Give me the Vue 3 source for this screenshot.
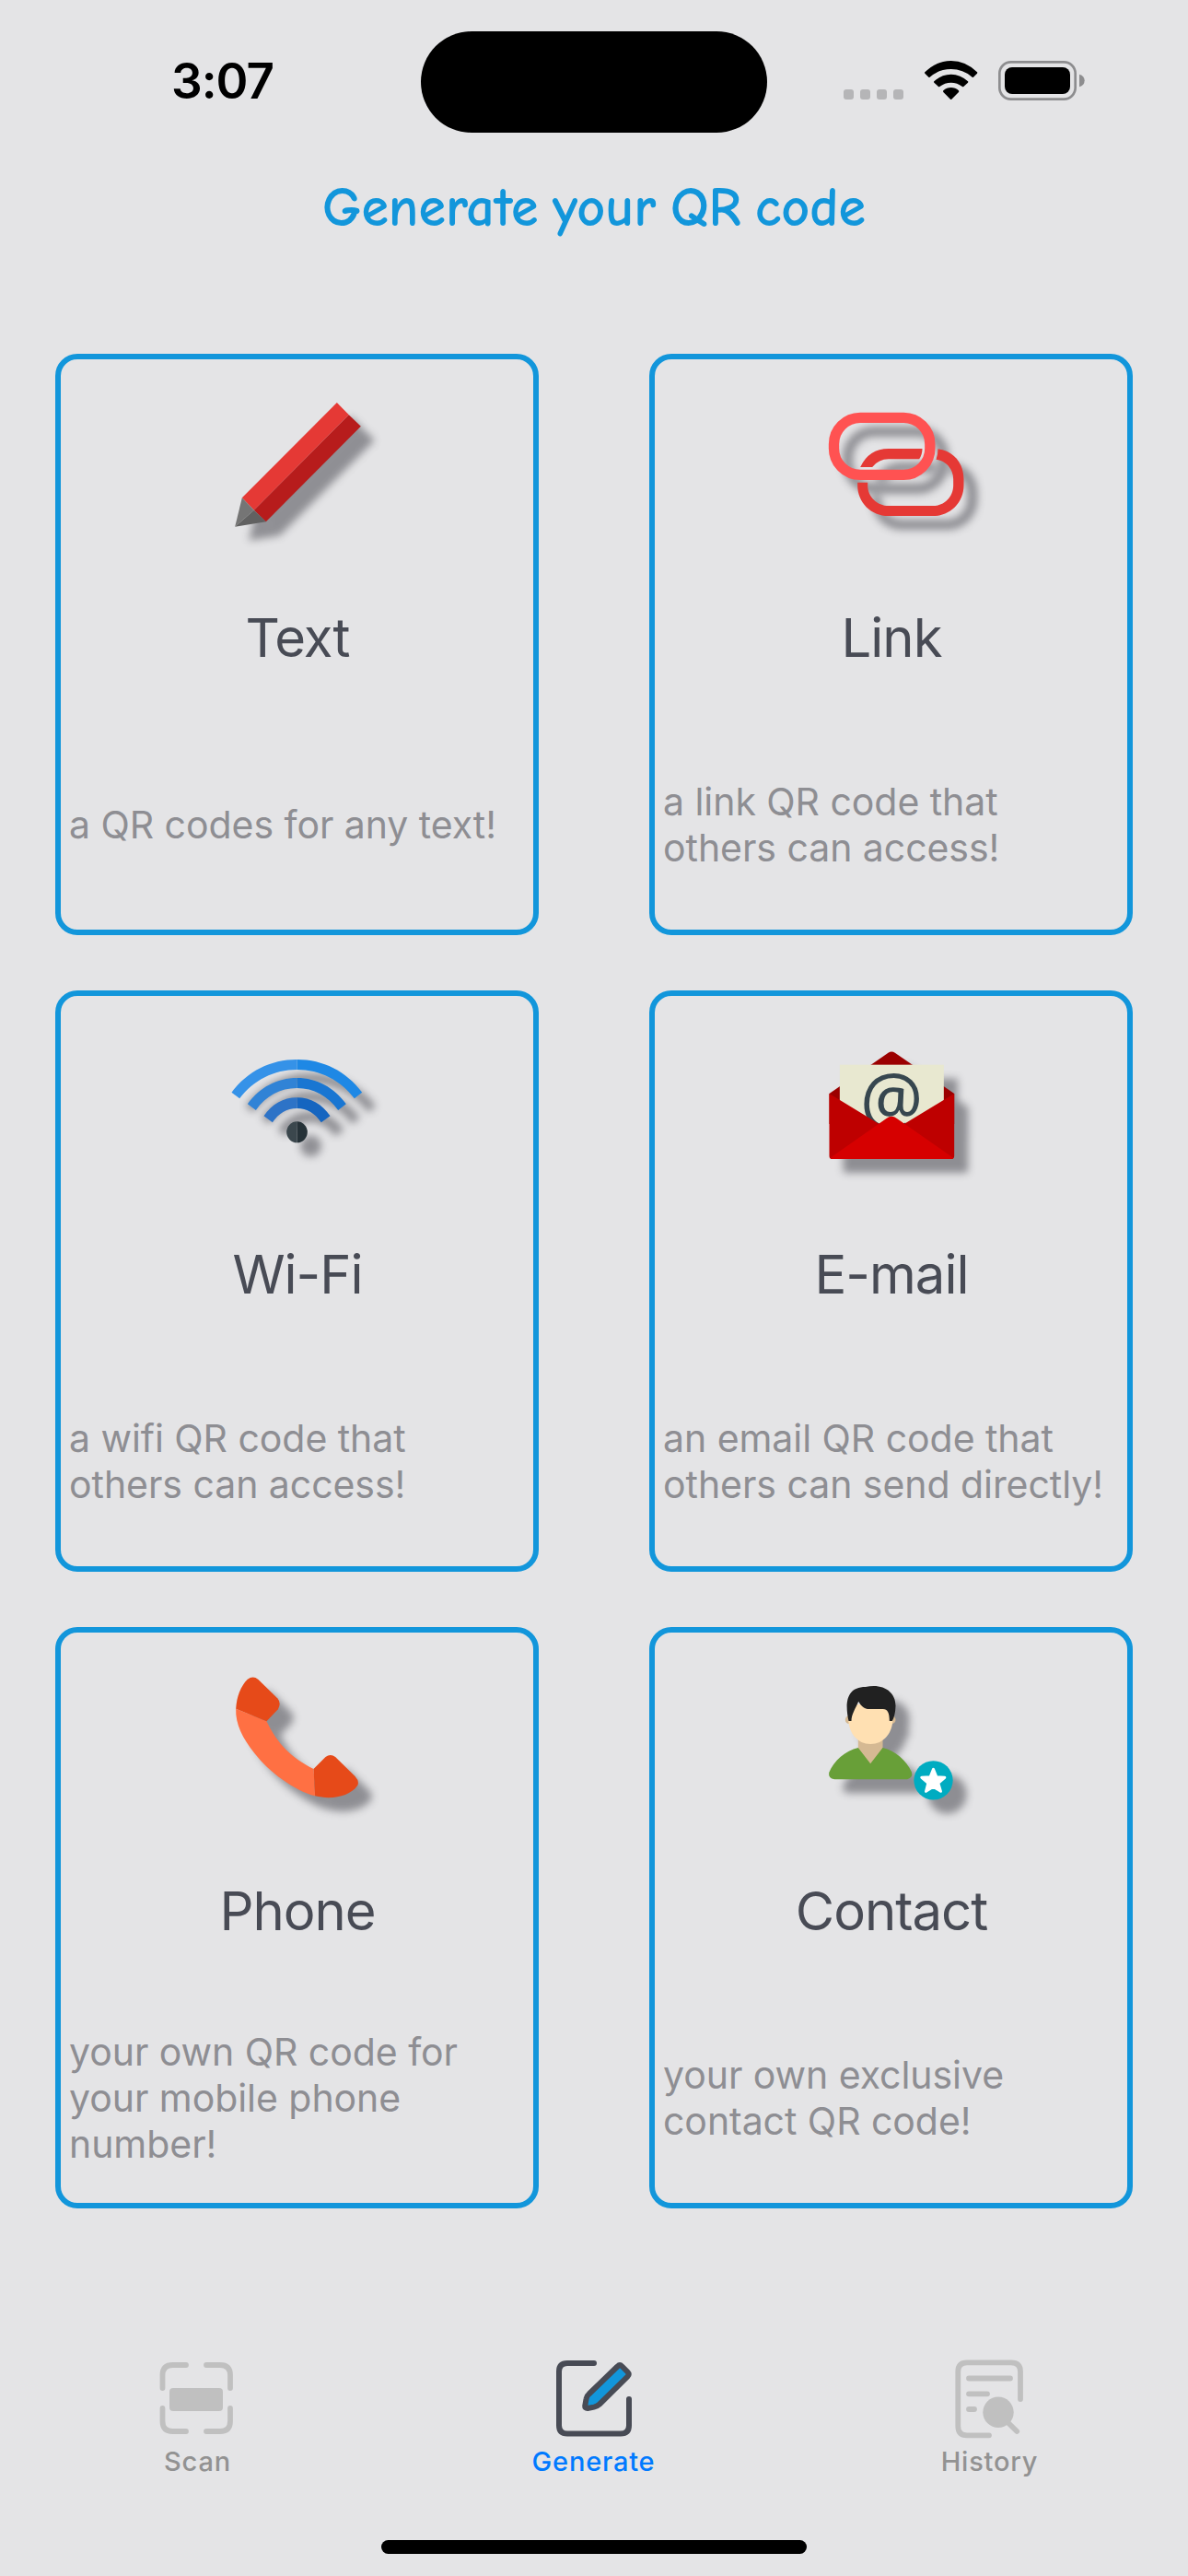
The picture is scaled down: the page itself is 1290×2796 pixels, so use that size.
<template>
  <div class="screen">
    <header class="status-bar">
      <div class="time">3:07</div>
      <div class="island"></div>
      <svg class="indicators" viewBox="0 0 900 210">
        <g fill="#b5b5b7">
          <rect v-for="x in [48, 102, 156, 210]" :key="x" :x="x" y="138" width="33" height="33" rx="9" />
        </g>
        <path d="M313 82Q350 45 398 45Q446 45 483 82Q485 84 483 86L471 98Q469 100 467 98Q437 72 398 72Q359 72 329 98Q327 100 325 98L313 86Q311 84 313 82Z" />
        <path d="M343 112Q367 89 398 89Q429 89 453 112Q455 114 453 116L439 129Q437 131 435 129Q418 116 398 116Q378 116 361 129Q359 131 357 129L343 116Q341 114 343 112Z" />
        <path d="M373 142Q384 132 398 132Q412 132 423 142Q425 144 423 147L400 170Q398 172 396 170L373 147Q371 144 373 142Z" />
        <rect x="556" y="49" width="247" height="121" rx="37" fill="none" stroke="#8d8d8f" stroke-width="8" />
        <rect x="573" y="66" width="213" height="87" rx="24" />
        <path d="M816 89Q833 94 833 109Q833 125 816 130Z" fill="#8d8d8f" />
      </svg>
    </header>

    <h1 class="heading">Generate your QR code</h1>

    <main class="grid">
      <section v-for="c in cards" :key="c.icon" class="card">
        <svg v-if="c.icon==='text'" class="icon" viewBox="82.5 75 450 450">
          <path d="M439 81L478 121L169 431L130 391Z" fill="#e53935" />
          <path d="M478 121L517 158L208 469L169 431Z" fill="#b71c1c" />
          <path d="M130 391L169 431L107 485Z" fill="#757575" />
          <path d="M169 431L208 469L107 485Z" fill="#616161" />
        </svg>

        <svg v-else-if="c.icon==='link'" class="icon" viewBox="97.5 75 450 450">
          <g fill="#e53935">
            <path d="M224 291Q252 231 316 231H426Q426 250 416 265H316Q284 265 263 291Z" />
            <path d="M477 232C528 238 561 279 561 330V350C561 406 517 450 461 450H316C259 450 215 406 215 350V341H248V350C248 387 279 417 316 417H461C498 417 527 387 527 350V330C527 297 503 270 471 266Q477 250 477 232Z" />
          </g>
          <rect x="138" y="130" width="313" height="186" rx="86" fill="none" stroke="#ff5252" stroke-width="34" />
        </svg>

        <svg v-else-if="c.icon==='wifi'" class="icon" viewBox="82.5 48 450 450">
          <path d="M96 227C148 158 223 120 309 120V153C234 153 167 187 122 247Z" fill="#3592e8" />
          <path d="M521 227C469 158 394 120 309 120V153C384 153 451 187 496 247Z" fill="#1e88e5" />
          <path d="M148 265C187 211 244 180 309 180V213C254 213 207 239 175 285Z" fill="#3083d6" />
          <path d="M469 265C430 211 373 180 309 180V213C363 213 410 239 443 285Z" fill="#1976d2" />
          <path d="M201 304C227 266 264 244 309 244V279C275 279 249 296 229 325Z" fill="#2d73c7" />
          <path d="M417 304C391 266 354 244 309 244V279C342 279 368 296 388 325Z" fill="#1565c0" />
          <path d="M309 322A34 34.500 0 0 0 309 391Z" fill="#3b474d" />
          <path d="M309 322A34 34.500 0 0 1 309 391Z" fill="#263238" />
        </svg>

        <svg v-else-if="c.icon==='email'" class="icon" viewBox="97.5 48 450 450">
          <path d="M123 231L315 98Q326 91 337 98L530 231V330H123Z" fill="#9b0000" />
          <rect x="157" y="137" width="339" height="230" fill="#e8e8d0" />
          <text class="at" x="326" y="329" text-anchor="middle">@</text>
          <path d="M123 231L326 355L530 231V434Q530 444 520 444H133Q123 444 123 434Z" fill="#be0000" />
          <path d="M126 440L309 312Q326 299 343 312L527 440Q524 444 519 444H134Q129 444 126 440Z" fill="#d60000" />
        </svg>

        <svg v-else-if="c.icon==='phone'" class="icon" viewBox="82.5 81 450 450">
          <path d="M110 194L210 235C245 308 290 354 363 390L368 478C300 460 218 400 170 338C132 290 108 244 110 194Z" fill="#ff7043" />
          <path d="M110 194C112 155 126 119 148 98Q166 85 183 99L245 160Q259 175 247 196L210 235Z" fill="#e64a19" />
          <path d="M363 390L402 351Q418 339 434 351L498 414Q513 430 506 444C480 481 420 491 368 478Z" fill="#e64a19" />
        </svg>

        <svg v-else class="icon" viewBox="67.5 51 450 450">
          <circle cx="158" cy="200" r="13" fill="#d5b993" />
          <circle cx="296" cy="200" r="13" fill="#d5b993" />
          <path d="M187 262H267V293L246 350H208L187 293Z" fill="#d5b993" />
          <path d="M155 195V150H300V195C300 243 270 279 227 279C185 279 155 243 155 195Z" fill="#ffe0b2" />
          <path d="M156 204C143 145 149 93 211 93C269 80 310 110 309 155Q308 185 298 204H289C289 178 283 165 268 165H224C206 165 197 155 188 140C178 164 165 182 165 204Z" fill="#212121" />
          <path d="M187 291L227 343L267 291C308 301 345 333 361 370Q367 389 347 394H110Q89 391 92 372C108 333 146 301 187 291Z" fill="#689f38" />
          <circle cx="432" cy="397" r="63.500" fill="#00acc1" />
          <path d="M432 361L442 386L469 388L448 406L456 433L432 418L408 433L415 406L394 388L422 386Z" fill="#fff" stroke="#fff" stroke-width="9" stroke-linejoin="round" />
        </svg>

        <h2 class="title">{{ c.title }}</h2>
        <div class="desc">
          <p v-for="l in c.lines" :key="l">{{ l }}</p>
        </div>
      </section>
    </main>

    <nav class="tabs">
      <div class="tab">
        <svg class="tab-icon muted" viewBox="0 0 90 90">
          <path d="M6.500 33V19Q6.500 8 17.500 8H32M54 8H69Q80 8 80 19V33M80 55V69Q80 80 69 80H54M32 80H17.500Q6.500 80 6.500 69V55" />
          <rect x="14" y="33" width="58" height="25" rx="4" fill="#c0c0c0" stroke="none" />
        </svg>
        <span>Scan</span>
      </div>
      <div class="tab active">
        <svg class="tab-icon" viewBox="0 0 90 90">
          <path d="M45 6H16Q7 6 7 15V73.500Q7 82.500 16 82.500H74Q83 82.500 83 73.500V45" />
          <path d="M70.500 9.500Q73 7 75.500 9.500L81.500 15.500Q84 18 81.500 20.500L51 50.500Q48.500 52.800 45 53.600L38 55Q35 55 35.200 52.500L36.600 44.500Q37 41.500 39.500 39.500Z" fill="#1296db" />
        </svg>
        <span>Generate</span>
      </div>
      <div class="tab">
        <svg class="tab-icon muted" viewBox="0 0 90 90">
          <path d="M44 84.300H20Q10.300 84.300 10.300 74.500V15Q10.300 5.300 20 5.300H68Q78 5.300 78 15V45M22 22.500H67M22 39.300H42M22 56H28M64 70L74.200 80" />
          <circle cx="54" cy="59.300" r="16.700" fill="#c0c0c0" stroke="none" />
        </svg>
        <span>History</span>
      </div>
    </nav>
    <div class="home-indicator"></div>
  </div>
</template>

<script setup>
const cards = [
  { icon: 'text', title: 'Text', lines: ['a QR codes for any text!'] },
  { icon: 'link', title: 'Link', lines: ['a link QR code that', 'others can access!'] },
  { icon: 'wifi', title: 'Wi-Fi', lines: ['a wifi QR code that', 'others can access!'] },
  { icon: 'email', title: 'E-mail', lines: ['an email QR code that', 'others can send directly!'] },
  { icon: 'phone', title: 'Phone', lines: ['your own QR code for', 'your mobile phone', 'number!'] },
  { icon: 'contact', title: 'Contact', lines: ['your own exclusive', 'contact QR code!'] },
];
</script>

<style>
body{ margin:0; background:#e4e4e6;}
</style>

<style scoped>
.screen{ display:flex; flex-direction:column; box-sizing:border-box; width:1290px; height:2796px; background:#e4e4e6; font-family: Inter, "Liberation Sans", sans-serif;}
h1, h2, p{ margin:0; font-weight:400;}

.status-bar{ display:grid; grid-template-columns: 456px 378px 1fr; height:144px; padding-top:33px; box-sizing:border-box;}
.time{ padding:22px 0 0 27px; line-height:66px; text-align:center; font-size:53px; font-weight:600; letter-spacing:-1px; color:#000;}
.island{ height:110px; margin:1px 1px 0; border-radius:56px; background:#000;}
.indicators{ width:300px; height:70px; margin:18px 0 0 66px;}

.heading{ height:80px; margin-top:42px; line-height:80px; text-align:center; font-family: "Comic Neue", "Comic Sans MS", Lato, sans-serif; font-size:60px; font-weight:700; word-spacing:-6px; color:#1296db;}

.grid{ display:grid; grid-template-columns: 525px 525px; grid-auto-rows:631px; gap:60px 120px; margin:118px 60px 0;}
.card{ display:flex; flex-direction:column; align-items:center; box-sizing:border-box; padding:45px 8px 0 9px; border:6px solid #1296db; border-radius:24px;}
.icon{ flex:none; width:150px; height:150px; margin-right:2px; overflow:visible; filter:drop-shadow(15px 15px 4px #8e8e93);}
.at{ font-family:"Noto Sans", sans-serif; font-size:228px; fill:#37474f;}
.title{ height:72px; margin-top:71px; line-height:72px; font-size:58px; letter-spacing:-1px; color:#484b55;}
.desc{ display:flex; flex-direction:column; justify-content:center; align-self:stretch; height:150px; margin-top:92px; line-height:50px; font-size:41px; letter-spacing:-0.050px; color:#8e8e93; white-space:nowrap;}

.tabs{ display:grid; grid-template-columns: repeat(3, 1fr); margin-top:162px;}
.tab{ display:flex; flex-direction:column; align-items:center; font-size:29px; font-weight:500; line-height:36px; letter-spacing:0.800px; color:#929292;}
.tab span{ margin-right:1px;}
.tab.active{ color:#007aff;}
.tab-icon{ width:90px; height:90px; margin-bottom:5px; fill:none; stroke:#484b55; stroke-width:6; stroke-linecap:round; stroke-linejoin:round;}
.tab-icon.muted{ stroke:#c0c0c0; stroke-width:5.800;}
.home-indicator{ width:462px; height:15px; margin:67px auto 0; border-radius:8px; background:#000;}
</style>
